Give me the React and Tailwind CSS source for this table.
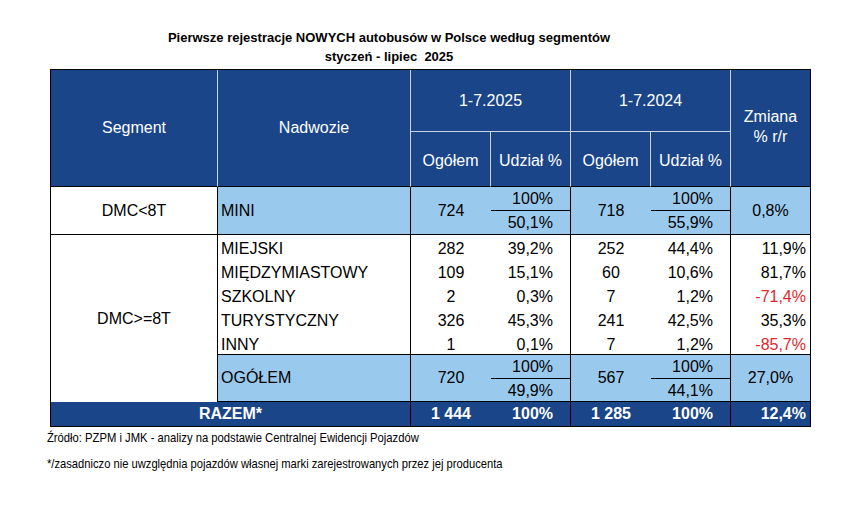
const H = 'bg-[#1a4589] text-white flex items-center justify-center'
const LB = 'bg-[#99caee]'

const rows = [
  { name: 'MIEJSKI', a: '282', b: '39,2%', c: '252', d: '44,4%', z: '11,9%' },
  { name: 'MIĘDZYMIASTOWY', a: '109', b: '15,1%', c: '60', d: '10,6%', z: '81,7%' },
  { name: 'SZKOLNY', a: '2', b: '0,3%', c: '7', d: '1,2%', z: '-71,4%', neg: true },
  { name: 'TURYSTYCZNY', a: '326', b: '45,3%', c: '241', d: '42,5%', z: '35,3%' },
  { name: 'INNY', a: '1', b: '0,1%', c: '7', d: '1,2%', z: '-85,7%', neg: true },
]

function Fraction({ bottom }) {
  return (
    <div className="flex flex-col h-full">
      <div className="h-[24px] border-b border-black flex items-center justify-end pr-[17px]">100%</div>
      <div className="flex-1 flex items-center justify-end pr-[17px]">{bottom}</div>
    </div>
  )
}

export default function App() {
  return (
    <div className="w-[859px] h-[506px] bg-white font-['Liberation_Sans',Arial,sans-serif] text-black">
      {/* Title */}
      <div className="w-[778px] pt-[28px] text-center font-bold text-[13px] leading-[19px]">
        <div>Pierwsze rejestracje NOWYCH autobusów w Polsce według segmentów</div>
        <div className="whitespace-pre">styczeń - lipiec  2025</div>
      </div>

      {/* Table */}
      <div className="ml-[50px] mt-[3px] w-[761px] border-l border-t border-black grid grid-cols-[167px_193px_80px_80px_80px_80px_80px] grid-rows-[62px_55px_48px_24px_24px_24px_24px_24px_47px_25px] text-[16px]">
        {/* header */}
        <div className={`${H} col-start-1 row-start-1 row-span-2 border-r border-b border-r-[#c9d6ea] border-b-black`}>Segment</div>
        <div className={`${H} col-start-2 row-start-1 row-span-2 border-r border-b border-r-[#c9d6ea] border-b-black`}>Nadwozie</div>
        <div className={`${H} col-start-3 col-span-2 row-start-1 border-r border-b border-[#c9d6ea]`}>1-7.2025</div>
        <div className={`${H} col-start-5 col-span-2 row-start-1 border-r border-b border-[#c9d6ea]`}>1-7.2024</div>
        <div className={`${H} col-start-7 row-start-1 row-span-2 border-r border-b border-black flex-col leading-[20px] pb-[2px]`}>
          <span>Zmiana</span>
          <span>% r/r</span>
        </div>
        <div className={`${H} col-start-3 row-start-2 border-r border-b border-r-[#c9d6ea] border-b-black pt-[4px]`}>Ogółem</div>
        <div className={`${H} col-start-4 row-start-2 border-r border-b border-r-[#c9d6ea] border-b-black pt-[4px]`}>Udział %</div>
        <div className={`${H} col-start-5 row-start-2 border-r border-b border-r-[#c9d6ea] border-b-black pt-[4px]`}>Ogółem</div>
        <div className={`${H} col-start-6 row-start-2 border-r border-b border-r-[#c9d6ea] border-b-black pt-[4px]`}>Udział %</div>

        {/* MINI */}
        <div className="col-start-1 row-start-3 border-r border-b border-black flex items-center justify-center">DMC&lt;8T</div>
        <div className={`${LB} col-start-2 row-start-3 border-r border-b border-black flex items-center pl-[3px]`}>MINI</div>
        <div className={`${LB} col-start-3 row-start-3 border-b border-black flex items-center justify-center`}>724</div>
        <div className={`${LB} col-start-4 row-start-3 border-r border-b border-black`}><Fraction bottom="50,1%" /></div>
        <div className={`${LB} col-start-5 row-start-3 border-b border-black flex items-center justify-center`}>718</div>
        <div className={`${LB} col-start-6 row-start-3 border-r border-b border-black`}><Fraction bottom="55,9%" /></div>
        <div className={`${LB} col-start-7 row-start-3 border-r border-b border-black flex items-center justify-center`}>0,8%</div>

        {/* DMC>=8T */}
        <div className="col-start-1 row-start-4 row-span-6 border-r border-black flex items-center justify-center">DMC&gt;=8T</div>
        <div className="col-start-2 row-start-4 row-span-5 border-r border-b border-black flex flex-col pt-[2px]">
          {rows.map(r => <div key={r.name} className="h-[24px] flex items-center pl-[3px]">{r.name}</div>)}
        </div>
        <div className="col-start-3 row-start-4 row-span-5 border-b border-black flex flex-col pt-[2px]">
          {rows.map(r => <div key={r.name} className="h-[24px] flex items-center justify-center">{r.a}</div>)}
        </div>
        <div className="col-start-4 row-start-4 row-span-5 border-r border-b border-black flex flex-col pt-[2px]">
          {rows.map(r => <div key={r.name} className="h-[24px] flex items-center justify-end pr-[17px]">{r.b}</div>)}
        </div>
        <div className="col-start-5 row-start-4 row-span-5 border-b border-black flex flex-col pt-[2px]">
          {rows.map(r => <div key={r.name} className="h-[24px] flex items-center justify-center">{r.c}</div>)}
        </div>
        <div className="col-start-6 row-start-4 row-span-5 border-r border-b border-black flex flex-col pt-[2px]">
          {rows.map(r => <div key={r.name} className="h-[24px] flex items-center justify-end pr-[17px]">{r.d}</div>)}
        </div>
        <div className="col-start-7 row-start-4 row-span-5 border-r border-b border-black flex flex-col pt-[2px]">
          {rows.map(r => (
            <div key={r.name} className={`h-[24px] flex items-center justify-end pr-[4px] ${r.neg ? 'text-[#e3262d]' : ''}`}>{r.z}</div>
          ))}
        </div>

        {/* OGÓŁEM */}
        <div className={`${LB} col-start-2 row-start-9 border-r border-b border-black flex items-center pl-[3px]`}>OGÓŁEM</div>
        <div className={`${LB} col-start-3 row-start-9 border-b border-black flex items-center justify-center`}>720</div>
        <div className={`${LB} col-start-4 row-start-9 border-r border-b border-black`}><Fraction bottom="49,9%" /></div>
        <div className={`${LB} col-start-5 row-start-9 border-b border-black flex items-center justify-center`}>567</div>
        <div className={`${LB} col-start-6 row-start-9 border-r border-b border-black`}><Fraction bottom="44,1%" /></div>
        <div className={`${LB} col-start-7 row-start-9 border-r border-b border-black flex items-center justify-center`}>27,0%</div>

        {/* RAZEM */}
        <div className={`${H} col-start-1 col-span-2 row-start-10 border-r border-b border-black font-bold`}>RAZEM*</div>
        <div className={`${H} col-start-3 row-start-10 border-b border-black font-bold`}>1 444</div>
        <div className="bg-[#1a4589] text-white col-start-4 row-start-10 border-r border-b border-black font-bold flex items-center justify-end pr-[17px]">100%</div>
        <div className={`${H} col-start-5 row-start-10 border-b border-black font-bold`}>1 285</div>
        <div className="bg-[#1a4589] text-white col-start-6 row-start-10 border-r border-b border-black font-bold flex items-center justify-end pr-[17px]">100%</div>
        <div className="bg-[#1a4589] text-white col-start-7 row-start-10 border-r border-b border-black font-bold flex items-center justify-end pr-[4px]">12,4%</div>
      </div>

      {/* Footnotes */}
      <div className="ml-[47px] mt-[1px] text-[13px] leading-[20px]">
        <div className="origin-left scale-x-[0.865] whitespace-nowrap">Źródło: PZPM i JMK - analizy na podstawie Centralnej Ewidencji Pojazdów</div>
        <div className="mt-[6px] origin-left scale-x-[0.86] whitespace-nowrap">*/zasadniczo nie uwzględnia pojazdów własnej marki zarejestrowanych przez jej producenta</div>
      </div>
    </div>
  )
}
